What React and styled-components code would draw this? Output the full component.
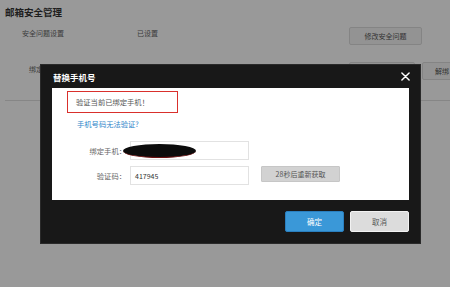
import React from "react";
import styled, { createGlobalStyle } from "styled-components";

const Global = createGlobalStyle`
  html, body { margin: 0; padding: 0; background: #fff; }
  body {
    width: 450px; height: 287px; overflow: hidden;
    font-family: "Noto Sans CJK SC", "Noto Sans", "Liberation Sans", sans-serif;
  }
`;

const Page = styled.div`
  position: relative;
  width: 450px;
  height: 287px;
  padding: 0 0 0 5px;
  box-sizing: border-box;
  overflow: hidden;
`;

const PageTitle = styled.h1`
  margin: 0;
  height: 24px;
  line-height: 24px;
  font-size: 9.5px;
  font-weight: bold;
  color: #333;
`;

const Row = styled.div`
  display: flex;
  align-items: flex-start;
  height: 18px;
  margin-top: ${(p) => p.$top}px;
  font-size: 7px;
  color: #666;
`;

const Label = styled.div`
  width: 76px;
  flex-shrink: 0;
  text-align: center;
  line-height: ${(p) => p.$lh}px;
`;

const Value = styled.div`
  width: 268px;
  flex-shrink: 0;
  padding-left: 56px;
  box-sizing: border-box;
  line-height: 12px;
`;

const BgButton = styled.div`
  width: ${(p) => p.$w}px;
  height: 18px;
  margin-right: ${(p) => p.$mr || 0}px;
  box-sizing: border-box;
  border: 1px solid #ddd;
  border-radius: 2px;
  background: #f5f5f5;
  color: #555;
  font-size: 7px;
  display: flex;
  align-items: center;
  justify-content: center;
  flex-shrink: 0;
`;

const Divider = styled.div`
  margin-top: 20px;
  height: 1px;
  background: #e0e0e0;
`;

const Overlay = styled.div`
  position: absolute;
  inset: 0;
  background: rgba(0, 0, 0, 0.4);
`;

const Dialog = styled.div`
  position: absolute;
  left: 40px;
  top: 64px;
  width: 381px;
  height: 180px;
  background: #181818;
  border: 1px solid #2a2a2a;
  box-sizing: border-box;
  display: flex;
  flex-direction: column;
`;

const DialogHead = styled.div`
  height: 23px;
  display: flex;
  align-items: center;
  justify-content: space-between;
  padding: 0 10px 0 12px;
`;

const DialogTitle = styled.div`
  color: #fff;
  font-size: 8.5px;
  font-weight: bold;
`;

const Close = styled.svg`
  width: 9px;
  height: 9px;
`;

const Body = styled.div`
  margin: 0 11px;
  height: 112px;
  background: #fff;
  padding: 3px 0 0 15px;
  box-sizing: border-box;
  font-size: 7.3px;
  color: #555;
`;

const Notice = styled.div`
  width: 111px;
  height: 22px;
  box-sizing: border-box;
  border: 1px solid #d9302c;
  padding-left: 8px;
  display: flex;
  align-items: center;
  color: #555;
`;

const Link = styled.a`
  display: block;
  margin: 5px 0 0 10px;
  line-height: 12px;
  color: #2f86c9;
  text-decoration: none;
`;

const Form = styled.div`
  margin-top: 11px;
  display: flex;
  flex-direction: column;
  gap: 6px;
`;

const FormRow = styled.div`
  display: flex;
  align-items: center;
`;

const FieldLabel = styled.div`
  width: 59px;
  text-align: right;
  color: #666;
`;

const Input = styled.div`
  position: relative;
  margin-left: 4px;
  width: 119px;
  height: 19px;
  box-sizing: border-box;
  border: 1px solid #e2e2e2;
  padding-left: 4px;
  display: flex;
  align-items: center;
  color: #333;
  font-size: 7px;
`;

const Redact = styled.span`
  position: absolute;
  left: -8px;
  top: 2px;
  width: 73px;
  height: 13px;
  border-radius: 50%;
  background: #0c0c0c;
  border-bottom: 1px solid #6a1010;
  filter: blur(0.4px);
`;

const ResendButton = styled.div`
  margin-left: 12px;
  align-self: flex-start;
  width: 79px;
  height: 16px;
  box-sizing: border-box;
  background: #d2d2d2;
  border: 1px solid #c6c6c6;
  border-radius: 1px;
  color: #555;
  font-size: 7px;
  display: flex;
  align-items: center;
  justify-content: center;
`;

const Footer = styled.div`
  flex: 1;
  display: flex;
  justify-content: flex-end;
  align-items: flex-start;
  gap: 6px;
  padding: 11px 11px 0 0;
`;

const DlgButton = styled.div`
  width: 59px;
  height: 21px;
  box-sizing: border-box;
  border-radius: 2px;
  font-size: 7.5px;
  display: flex;
  align-items: center;
  justify-content: center;
  ${(p) =>
    p.$primary
      ? `background: #3a98d8; border: 1px solid #2a7fbf; color: #fff;`
      : `background: #dcdcdc; border: 1px solid #f2f2f2; color: #555;`}
`;

export default function App() {
  return (
    <>
      <Global />
      <Page>
        <PageTitle>邮箱安全管理</PageTitle>
        <Row $top={3}>
          <Label $lh={12}>安全问题设置</Label>
          <Value>已设置</Value>
          <BgButton $w={73}>修改安全问题</BgButton>
        </Row>
        <Row $top={17}>
          <Label $lh={14}>绑定手机</Label>
          <Value>138****0000</Value>
          <BgButton $w={66} $mr={7}>更换手机</BgButton>
          <BgButton $w={40}>解绑</BgButton>
        </Row>
        <Divider />
        <Overlay />
        <Dialog>
          <DialogHead>
            <DialogTitle>替换手机号</DialogTitle>
            <Close viewBox="0 0 10 10">
              <path d="M1 1 L9 9 M9 1 L1 9" stroke="#fff" strokeWidth="1.6" strokeLinecap="round" />
            </Close>
          </DialogHead>
          <Body>
            <Notice>验证当前已绑定手机！</Notice>
            <Link href="#">手机号码无法验证?</Link>
            <Form>
              <FormRow>
                <FieldLabel>绑定手机：</FieldLabel>
                <Input>
                  <Redact />
                </Input>
              </FormRow>
              <FormRow>
                <FieldLabel>验证码：</FieldLabel>
                <Input>417945</Input>
                <ResendButton>28秒后重新获取</ResendButton>
              </FormRow>
            </Form>
          </Body>
          <Footer>
            <DlgButton $primary>确定</DlgButton>
            <DlgButton>取消</DlgButton>
          </Footer>
        </Dialog>
      </Page>
    </>
  );
}
